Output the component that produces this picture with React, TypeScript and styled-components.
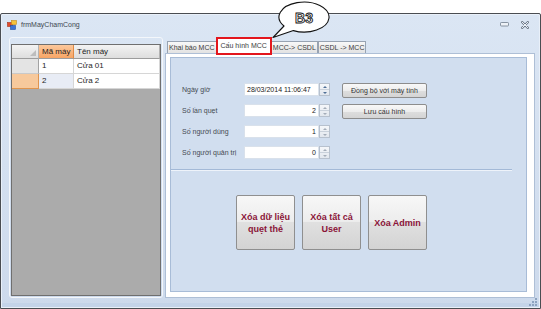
import { Fragment } from 'react';
import styled, { createGlobalStyle } from 'styled-components';

const GlobalStyle = createGlobalStyle`
    html, body {
        margin: 0;
        padding: 0;
        background: #fff;
    }
    body {
        font-family: "Liberation Sans", Arial, sans-serif;
    }
    * {
        box-sizing: border-box;
    }
`;

const Page = styled.div`
    position: relative;
    width: 541px;
    height: 309px;
    padding-top: 13px;
`;

const Window = styled.div`
    position: relative;
    width: 541px;
    height: 296px;
    border: 1px solid #4a4d52;
    border-radius: 2px 2px 0 0;
    background: linear-gradient(#dbe6f4, #cddaec);
    box-shadow: inset 0 0 0 1px #e9f0f9, inset 0 -5px 0 #c4d4e9;
    display: flex;
    flex-direction: column;
`;

const TitleBar = styled.div`
    height: 19px;
    display: flex;
    align-items: center;
    padding: 2px 11px 0 6px;
    gap: 4px;
`;

const Title = styled.span`
    font-size: 7px;
    color: #404650;
`;

const TitleControls = styled.div`
    margin-left: auto;
    display: flex;
    align-items: center;
    gap: 12px;
`;

const Client = styled.div`
    flex: 1;
    display: flex;
    gap: 2px;
    padding: 4px 5px 10px 8px;
`;

const GridPanel = styled.div`
    width: 154px;
    display: flex;
    flex-direction: column;
    border: 1px solid #f4f7fb;
    border-radius: 3px;
    padding: 6px 1px 1px 1px;
`;

const Grid = styled.div`
    flex: 1;
    background: #ababab;
    border: 1px solid #6f6f6f;
`;

const GridRow = styled.div<{ $h: number }>`
    display: grid;
    grid-template-columns: 27px 35px 1fr;
    height: ${p => p.$h}px;
`;

const HeaderCell = styled.div<{ $active?: boolean }>`
    position: relative;
    font-size: 8px;
    line-height: 13px;
    padding-left: 3px;
    color: #1e1e1e;
    white-space: nowrap;
    background: ${p => (p.$active ? 'linear-gradient(#fcc89c, #f7a565)' : 'linear-gradient(#f3f3f3, #dedede)')};
    border-right: 1px solid ${p => (p.$active ? '#e08a45' : '#b3b3b3')};
    border-bottom: 1px solid #9c9c9c;
`;

const CornerCell = styled(HeaderCell)`
    &::after {
        content: '';
        position: absolute;
        right: 2px;
        bottom: 2px;
        width: 0;
        height: 0;
        border-left: 6px solid transparent;
        border-bottom: 6px solid #bdbdbd;
    }
`;

const RowHeader = styled.div<{ $active?: boolean }>`
    background: ${p => (p.$active ? '#f7c99c' : '#e4e4e4')};
    border-right: 1px solid ${p => (p.$active ? '#e0954e' : '#a3a3a3')};
    border-bottom: 1px solid ${p => (p.$active ? '#e0954e' : '#c9c9c9')};
`;

const Cell = styled.div<{ $tint?: boolean }>`
    font-size: 8px;
    line-height: 14px;
    padding-left: 3px;
    color: #1e1e1e;
    background: ${p => (p.$tint ? '#e8ecf5' : '#fff')};
    border-right: 1px solid #d6d6d6;
    border-bottom: 1px solid #d6d6d6;
`;

const TabArea = styled.div`
    flex: 1;
    display: flex;
    flex-direction: column;
`;

const TabStrip = styled.div`
    height: 16px;
    display: flex;
    align-items: flex-end;
    padding-left: 2px;
`;

const Tab = styled.div<{ $selected?: boolean }>`
    position: relative;
    z-index: ${p => (p.$selected ? 1 : 0)};
    height: ${p => (p.$selected ? 16 : 12)}px;
    margin-bottom: ${p => (p.$selected ? -1 : 0)}px;
    padding: 0 ${p => (p.$selected ? 3 : 1)}px;
    font-size: 7px;
    line-height: ${p => (p.$selected ? 13 : 11)}px;
    color: #3c3c3c;
    white-space: nowrap;
    border: 1px solid #98a3b2;
    border-bottom: none;
    background: ${p => (p.$selected ? '#fff' : 'linear-gradient(#f8f8f8, #e2e2e2)')};
    outline: ${p => (p.$selected ? '2px solid #e3161d' : 'none')};
    outline-offset: -1px;
`;

const TabPage = styled.div`
    flex: 1;
    display: flex;
    background: #fff;
    border: 1px solid #aebfd6;
    padding: 3px 7px 5px 4px;
`;

const ConfigPanel = styled.div`
    flex: 1;
    background: #d1deef;
    border: 1px solid #a8bcd7;
    display: flex;
    flex-direction: column;
`;

const TopSection = styled.div`
    display: flex;
    padding: 25px 0 0 11px;
`;

const FieldGrid = styled.div`
    display: grid;
    grid-template-columns: 62px 86px;
    grid-auto-rows: 13px;
    row-gap: 8px;
    align-items: center;
`;

const Label = styled.span`
    font-size: 7px;
    color: #454a52;
    white-space: nowrap;
`;

const Field = styled.div`
    display: flex;
    height: 13px;
`;

const FieldBox = styled.div<{ $align: 'left' | 'right' }>`
    flex: 1;
    background: #fff;
    border: 1px solid #d9e1eb;
    font-size: 7px;
    line-height: 11px;
    padding: 0 2px;
    color: #222;
    text-align: ${p => p.$align};
`;

const SpinBox = styled.div`
    width: 11px;
    display: flex;
    flex-direction: column;
    border: 1px solid #b7c1ce;
    background: linear-gradient(#f5f7fa, #e2e7ee);
`;

const SpinHalf = styled.div`
    flex: 1;
    display: flex;
    align-items: center;
    justify-content: center;

    & + & {
        border-top: 1px solid #c9d1db;
    }
`;

const Arrow = styled.span<{ $dir: 'up' | 'down'; $active?: boolean }>`
    width: 0;
    height: 0;
    border-left: 2px solid transparent;
    border-right: 2px solid transparent;
    ${p =>
        p.$dir === 'up'
            ? `border-bottom: 2px solid ${p.$active ? '#4f6f96' : '#a3acb8'};`
            : `border-top: 2px solid ${p.$active ? '#4f6f96' : '#a3acb8'};`}
`;

const SideButtons = styled.div`
    display: flex;
    flex-direction: column;
    gap: 6px;
    margin-left: 12px;
`;

const SmallButton = styled.button`
    width: 85px;
    height: 15px;
    padding: 0;
    font-family: "Liberation Sans", Arial, sans-serif;
    font-size: 7px;
    color: #333;
    border: 1px solid #8d8d8d;
    border-radius: 2px;
    background: linear-gradient(#f8f8f8 0%, #ededed 50%, #dedede 51%, #d4d4d4 100%);
`;

const Separator = styled.div`
    width: 341px;
    height: 2px;
    margin-top: 10px;
    border-top: 1px solid #a3b9d7;
    border-bottom: 1px solid #eef3fa;
`;

const ActionRow = styled.div`
    display: flex;
    gap: 7px;
    margin-top: 24px;
    padding-left: 65px;
`;

const BigButton = styled.button`
    width: 59px;
    height: 55px;
    padding: 0 3px;
    font-family: "Liberation Sans", Arial, sans-serif;
    font-size: 9px;
    font-weight: 700;
    line-height: 12px;
    color: #8a1438;
    border: 1px solid #8f8f8f;
    border-radius: 2px;
    background: linear-gradient(#f7f7f7 0%, #ededed 48%, #e0e0e0 50%, #d3d3d3 100%);
`;

const Grip = styled.svg`
    position: absolute;
    right: 3px;
    bottom: 2px;
`;

const Callout = styled.svg`
    position: absolute;
    left: 268px;
    top: 0;
    overflow: visible;
`;

const fields = [
    { label: 'Ngày giờ', value: '28/03/2014 11:06:47', align: 'left' as const, active: true },
    { label: 'Số lần quẹt', value: '2', align: 'right' as const },
    { label: 'Số người dùng', value: '1', align: 'right' as const },
    { label: 'Số người quản trị', value: '0', align: 'right' as const },
];

const machines = [
    { id: '1', name: 'Cửa 01' },
    { id: '2', name: 'Cửa 2' },
];

const tabs = ['Khai báo MCC', 'Cấu hình MCC', 'MCC-> CSDL', 'CSDL -> MCC'];

export default function App() {
    return (
        <>
            <GlobalStyle />
            <Page>
                <Window>
                    <TitleBar>
                        <svg width="10" height="10" viewBox="0 0 10 10">
                            <rect x="0.5" y="2.5" width="5" height="4" fill="#e24a2a" stroke="#a5321c" strokeWidth="0.6" />
                            <rect x="4.5" y="0.5" width="5" height="4" fill="#f6c23a" stroke="#c58d1c" strokeWidth="0.6" />
                            <rect x="3.5" y="5.5" width="5" height="4" fill="#3d74d6" stroke="#234f9c" strokeWidth="0.6" />
                        </svg>
                        <Title>frmMayChamCong</Title>
                        <TitleControls>
                            <svg width="9" height="5" viewBox="0 0 9 5">
                                <rect x="0.5" y="0.5" width="8" height="3.5" rx="0.8" fill="#eef2f7" stroke="#6f7c8c" strokeWidth="0.8" />
                            </svg>
                            <svg width="8" height="8" viewBox="0 0 8 8">
                                <path d="M1 1 L7 7 M7 1 L1 7" stroke="#6f7c8c" strokeWidth="2.4" strokeLinecap="round" />
                                <path d="M1 1 L7 7 M7 1 L1 7" stroke="#eef2f7" strokeWidth="1" strokeLinecap="round" />
                            </svg>
                        </TitleControls>
                    </TitleBar>

                    <Client>
                        <GridPanel>
                            <Grid>
                                <GridRow $h={14}>
                                    <CornerCell />
                                    <HeaderCell $active>Mã máy</HeaderCell>
                                    <HeaderCell>Tên máy</HeaderCell>
                                </GridRow>
                                {machines.map((m, i) => (
                                    <GridRow key={m.id} $h={15}>
                                        <RowHeader $active={i === 1} />
                                        <Cell $tint={i === 1}>{m.id}</Cell>
                                        <Cell>{m.name}</Cell>
                                    </GridRow>
                                ))}
                            </Grid>
                        </GridPanel>

                        <TabArea>
                            <TabStrip>
                                {tabs.map((t, i) => (
                                    <Tab key={t} $selected={i === 1}>{t}</Tab>
                                ))}
                            </TabStrip>
                            <TabPage>
                                <ConfigPanel>
                                    <TopSection>
                                        <FieldGrid>
                                            {fields.map(f => (
                                                <Fragment key={f.label}>
                                                    <Label>{f.label}</Label>
                                                    <Field>
                                                        <FieldBox $align={f.align}>{f.value}</FieldBox>
                                                        <SpinBox>
                                                            <SpinHalf><Arrow $dir="up" $active={f.active} /></SpinHalf>
                                                            <SpinHalf><Arrow $dir="down" $active={f.active} /></SpinHalf>
                                                        </SpinBox>
                                                    </Field>
                                                </Fragment>
                                            ))}
                                        </FieldGrid>
                                        <SideButtons>
                                            <SmallButton>Đồng bộ với máy tính</SmallButton>
                                            <SmallButton>Lưu cấu hình</SmallButton>
                                        </SideButtons>
                                    </TopSection>
                                    <Separator />
                                    <ActionRow>
                                        <BigButton>Xóa dữ liệu quẹt thẻ</BigButton>
                                        <BigButton>Xóa tất cả User</BigButton>
                                        <BigButton>Xóa Admin</BigButton>
                                    </ActionRow>
                                </ConfigPanel>
                            </TabPage>
                        </TabArea>
                    </Client>

                    <Grip width="8" height="8" viewBox="0 0 8 8">
                        {[[6, 0], [6, 3], [3, 3], [6, 6], [3, 6], [0, 6]].map(([x, y]) => (
                            <rect key={`${x}-${y}`} x={x} y={y} width="2" height="2" fill="#8da3c0" />
                        ))}
                    </Grip>
                </Window>

                <Callout width="66" height="42" viewBox="0 0 66 42">
                    <path
                        d="M16 26 A25 15 0 1 1 25.4 30.6 L5 37.5 Z"
                        fill="#fff"
                        stroke="#111"
                        strokeWidth="1.1"
                        strokeLinejoin="round"
                    />
                    <text
                        x="36"
                        y="22.5"
                        textAnchor="middle"
                        fontFamily="Liberation Sans, Arial, sans-serif"
                        fontSize="14"
                        fontWeight="700"
                        fill="#fff"
                        stroke="#111"
                        strokeWidth="0.9"
                    >
                        B3
                    </text>
                </Callout>
            </Page>
        </>
    );
}
